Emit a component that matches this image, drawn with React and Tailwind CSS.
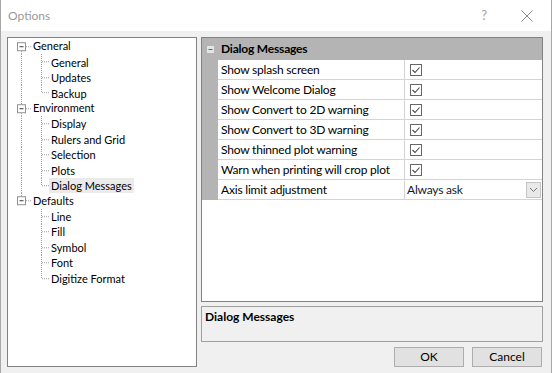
import React from "react"

const tree = [
  { label: "General", children: ["General", "Updates", "Backup"] },
  { label: "Environment", children: ["Display", "Rulers and Grid", "Selection", "Plots", "Dialog Messages"] },
  { label: "Defaults", children: ["Line", "Fill", "Symbol", "Font", "Digitize Format"] },
]

const rows = [
  "Show splash screen",
  "Show Welcome Dialog",
  "Show Convert to 2D warning",
  "Show Convert to 3D warning",
  "Show thinned plot warning",
  "Warn when printing will crop plot",
]

const H = 15.45
const M = H / 2
const dot = { stroke: "#a0a0a0", strokeWidth: 1, strokeDasharray: "1 1" }

function RootRow({ label, first, last }) {
  return (
    <div className="flex items-center h-[15.45px]">
      <svg width="25" height={H} className="shrink-0">
        {!first && <line x1="13.5" y1="0" x2="13.5" y2={M - 4.5} {...dot} />}
        <rect x="9.5" y={M - 4} width="8" height="8" fill="#fff" stroke="#919191" />
        <line x1="11.5" y1={M} x2="15.5" y2={M} stroke="#3b3b3b" />
        <line x1="18" y1={M} x2="24" y2={M} {...dot} />
        {!last && <line x1="13.5" y1={M + 4.5} x2="13.5" y2={H} {...dot} />}
      </svg>
      <span className="whitespace-nowrap">{label}</span>
    </div>
  )
}

function ChildRow({ label, parentLast, lastChild, selected }) {
  return (
    <div className="flex items-center h-[15.45px]">
      <svg width="41" height={H} className="shrink-0">
        {!parentLast && <line x1="13.5" y1="0" x2="13.5" y2={H} {...dot} />}
        <line x1="33.5" y1="0" x2="33.5" y2={lastChild ? M : H} {...dot} />
        <line x1="34" y1={M} x2="41" y2={M} {...dot} />
      </svg>
      <span className={`px-[2px] leading-[15px] whitespace-nowrap ${selected ? "bg-[#ebebeb]" : ""}`}>{label}</span>
    </div>
  )
}

function Check() {
  return (
    <svg width="12" height="12" viewBox="0 0 12 12">
      <rect x="0.5" y="0.5" width="11" height="11" fill="#fff" stroke="#666" />
      <path d="M2.5 6 L5 8.5 L9.5 3.5" fill="none" stroke="#444" strokeWidth="1.1" />
    </svg>
  )
}

export default function App() {
  return (
    <div className="w-[552px] h-[373px] bg-[#f0f0f0] flex flex-col text-[12px] text-black border-x border-[#a8a8a8] overflow-hidden" style={{ fontFamily: 'Lato, "Liberation Sans", sans-serif' }}>
      <div className="h-[31px] bg-white flex items-center pl-[7px] shrink-0">
        <span className="text-[#9a9a9a]">Options</span>
        <span className="ml-auto mr-[34px] text-[#a0a0a0] text-[13px]">?</span>
        <svg width="12" height="12" viewBox="0 0 12 12" className="mr-[18px]">
          <path d="M0.5 0.5 L11.5 11.5 M11.5 0.5 L0.5 11.5" stroke="#8a8a8a" strokeWidth="1" />
        </svg>
      </div>

      <div className="flex pt-[6px] pl-[6px] gap-[4px]">
        <div className="w-[190px] h-[330px] bg-white border border-[#828282] pt-[1px] shrink-0 text-[11px]">
          {tree.map((g, gi) => (
            <div key={g.label}>
              <RootRow label={g.label} first={gi === 0} last={gi === tree.length - 1} />
              {g.children.map((c, ci) => (
                <ChildRow
                  key={c}
                  label={c}
                  parentLast={gi === tree.length - 1}
                  lastChild={ci === g.children.length - 1}
                  selected={c === "Dialog Messages"}
                />
              ))}
            </div>
          ))}
        </div>

        <div className="w-[342px] flex flex-col">
          <div className="h-[265px] border border-[#828282] bg-white flex flex-col tracking-[-0.2px]">
            <div className="flex h-[22px] bg-[#b4b4b4] items-center shrink-0">
              <div className="w-[16px] flex justify-center">
                <svg width="7" height="7" viewBox="0 0 7 7">
                  <rect x="0" y="0" width="7" height="7" fill="#e4e4e4" />
                  <line x1="1.5" y1="3.5" x2="5.5" y2="3.5" stroke="#666" />
                </svg>
              </div>
              <span className="pl-[3px] font-bold">Dialog Messages</span>
            </div>
            {rows.map((r) => (
              <div key={r} className="flex h-[20px] shrink-0">
                <div className="w-[16px] bg-[#b4b4b4]" />
                <div className="w-[187px] pl-[3px] flex items-center whitespace-nowrap border-b border-r border-[#d4d4d4]">{r}</div>
                <div className="flex-1 pl-[5px] flex items-center border-b border-[#d4d4d4]">
                  <Check />
                </div>
              </div>
            ))}
            <div className="flex h-[20px] shrink-0">
              <div className="w-[16px] bg-[#b4b4b4]" />
              <div className="w-[187px] pl-[3px] flex items-center whitespace-nowrap border-b border-r border-[#d4d4d4]">Axis limit adjustment</div>
              <div className="flex-1 pl-[2px] flex items-center border-b border-[#d4d4d4]">
                <span className="text-[#101830]">Always ask</span>
                <div className="ml-auto mr-[1px] w-[15px] h-[16px] bg-[#e9e9e9] border border-[#c4c4c4] flex items-center justify-center">
                  <svg width="9" height="6" viewBox="0 0 9 6">
                    <path d="M1 1 L4.5 4.5 L8 1" fill="none" stroke="#777" />
                  </svg>
                </div>
              </div>
            </div>
          </div>

          <div className="mt-[4px] h-[36px] border border-[#a0a0a0] px-[3px] pt-[1px] font-bold">Dialog Messages</div>

          <div className="mt-[5px] flex justify-end gap-[8px] pr-[1px]">
            <button className="w-[70px] h-[20px] bg-[#e1e1e1] border border-[#adadad]">OK</button>
            <button className="w-[70px] h-[20px] bg-[#e1e1e1] border border-[#adadad]">Cancel</button>
          </div>
        </div>
      </div>
    </div>
  )
}
